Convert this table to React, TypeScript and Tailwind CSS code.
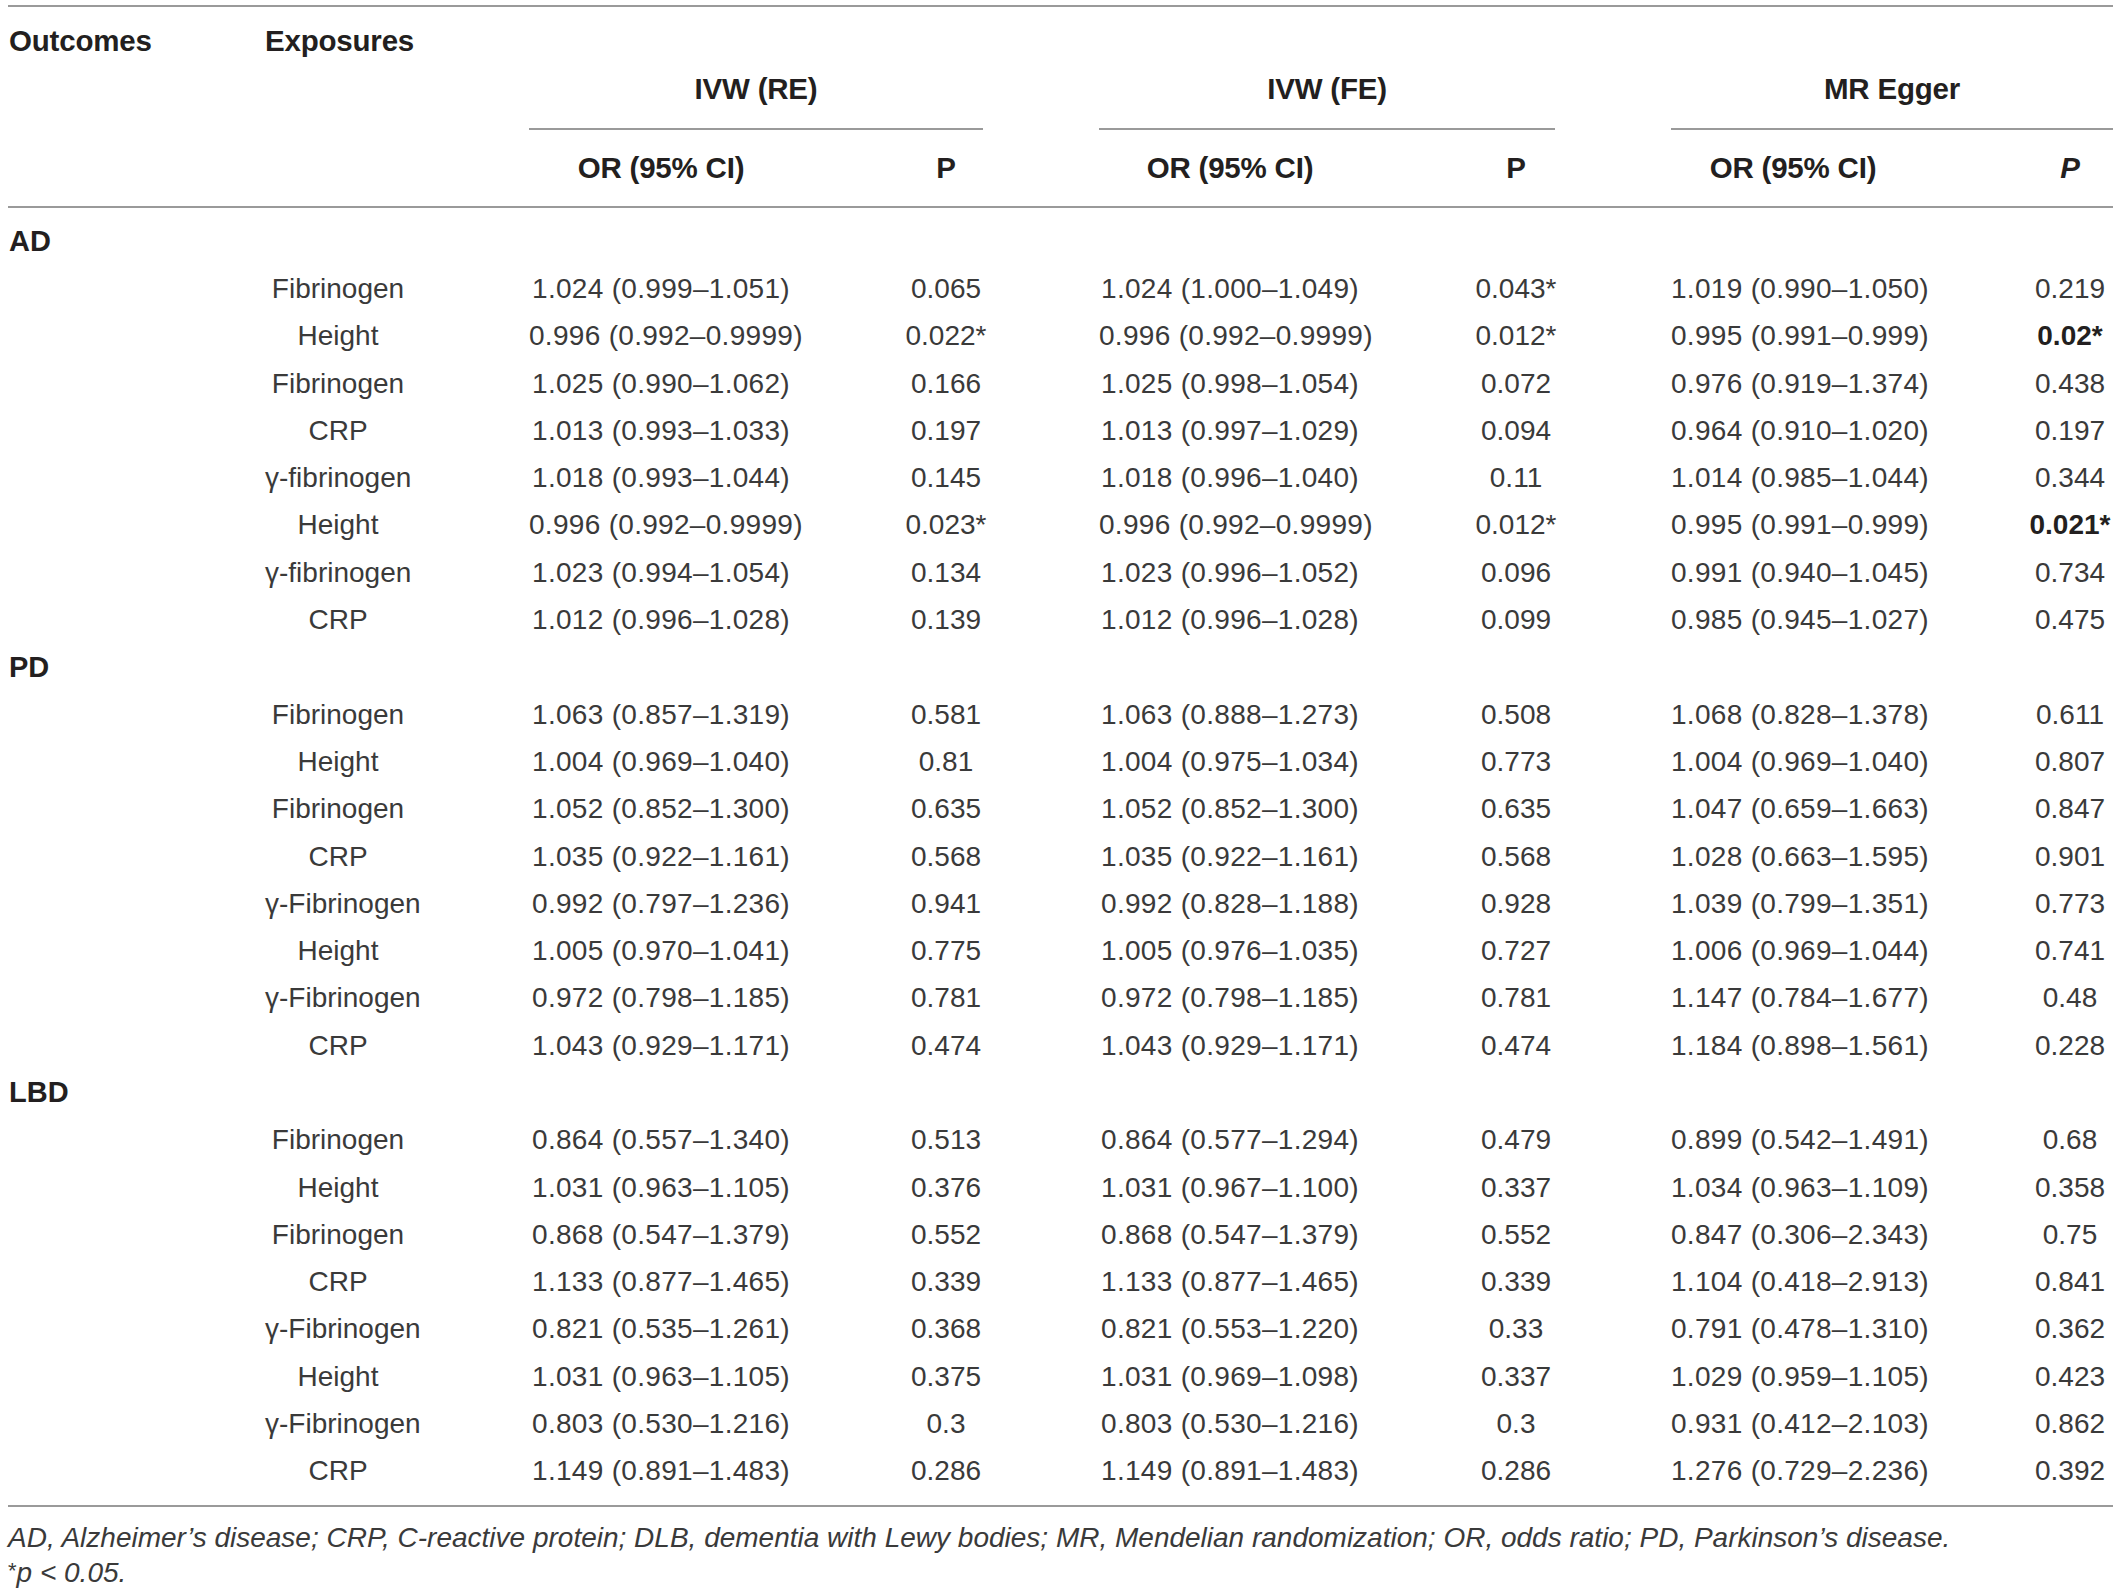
const cols = "grid grid-cols-[257px_146px_118px_264px_306px_262px_310px_244px_112px_86px]";

type Row = [string, string, string, string, string, string, string, boolean?];

const groups: { name: string; rows: Row[] }[] = [
  {
    name: "AD",
    rows: [
      ["Fibrinogen", "1.024 (0.999–1.051)", "0.065", "1.024 (1.000–1.049)", "0.043*", "1.019 (0.990–1.050)", "0.219"],
      ["Height", "0.996 (0.992–0.9999)", "0.022*", "0.996 (0.992–0.9999)", "0.012*", "0.995 (0.991–0.999)", "0.02*", true],
      ["Fibrinogen", "1.025 (0.990–1.062)", "0.166", "1.025 (0.998–1.054)", "0.072", "0.976 (0.919–1.374)", "0.438"],
      ["CRP", "1.013 (0.993–1.033)", "0.197", "1.013 (0.997–1.029)", "0.094", "0.964 (0.910–1.020)", "0.197"],
      ["γ-fibrinogen", "1.018 (0.993–1.044)", "0.145", "1.018 (0.996–1.040)", "0.11", "1.014 (0.985–1.044)", "0.344"],
      ["Height", "0.996 (0.992–0.9999)", "0.023*", "0.996 (0.992–0.9999)", "0.012*", "0.995 (0.991–0.999)", "0.021*", true],
      ["γ-fibrinogen", "1.023 (0.994–1.054)", "0.134", "1.023 (0.996–1.052)", "0.096", "0.991 (0.940–1.045)", "0.734"],
      ["CRP", "1.012 (0.996–1.028)", "0.139", "1.012 (0.996–1.028)", "0.099", "0.985 (0.945–1.027)", "0.475"],
    ],
  },
  {
    name: "PD",
    rows: [
      ["Fibrinogen", "1.063 (0.857–1.319)", "0.581", "1.063 (0.888–1.273)", "0.508", "1.068 (0.828–1.378)", "0.611"],
      ["Height", "1.004 (0.969–1.040)", "0.81", "1.004 (0.975–1.034)", "0.773", "1.004 (0.969–1.040)", "0.807"],
      ["Fibrinogen", "1.052 (0.852–1.300)", "0.635", "1.052 (0.852–1.300)", "0.635", "1.047 (0.659–1.663)", "0.847"],
      ["CRP", "1.035 (0.922–1.161)", "0.568", "1.035 (0.922–1.161)", "0.568", "1.028 (0.663–1.595)", "0.901"],
      ["γ-Fibrinogen", "0.992 (0.797–1.236)", "0.941", "0.992 (0.828–1.188)", "0.928", "1.039 (0.799–1.351)", "0.773"],
      ["Height", "1.005 (0.970–1.041)", "0.775", "1.005 (0.976–1.035)", "0.727", "1.006 (0.969–1.044)", "0.741"],
      ["γ-Fibrinogen", "0.972 (0.798–1.185)", "0.781", "0.972 (0.798–1.185)", "0.781", "1.147 (0.784–1.677)", "0.48"],
      ["CRP", "1.043 (0.929–1.171)", "0.474", "1.043 (0.929–1.171)", "0.474", "1.184 (0.898–1.561)", "0.228"],
    ],
  },
  {
    name: "LBD",
    rows: [
      ["Fibrinogen", "0.864 (0.557–1.340)", "0.513", "0.864 (0.577–1.294)", "0.479", "0.899 (0.542–1.491)", "0.68"],
      ["Height", "1.031 (0.963–1.105)", "0.376", "1.031 (0.967–1.100)", "0.337", "1.034 (0.963–1.109)", "0.358"],
      ["Fibrinogen", "0.868 (0.547–1.379)", "0.552", "0.868 (0.547–1.379)", "0.552", "0.847 (0.306–2.343)", "0.75"],
      ["CRP", "1.133 (0.877–1.465)", "0.339", "1.133 (0.877–1.465)", "0.339", "1.104 (0.418–2.913)", "0.841"],
      ["γ-Fibrinogen", "0.821 (0.535–1.261)", "0.368", "0.821 (0.553–1.220)", "0.33", "0.791 (0.478–1.310)", "0.362"],
      ["Height", "1.031 (0.963–1.105)", "0.375", "1.031 (0.969–1.098)", "0.337", "1.029 (0.959–1.105)", "0.423"],
      ["γ-Fibrinogen", "0.803 (0.530–1.216)", "0.3", "0.803 (0.530–1.216)", "0.3", "0.931 (0.412–2.103)", "0.862"],
      ["CRP", "1.149 (0.891–1.483)", "0.286", "1.149 (0.891–1.483)", "0.286", "1.276 (0.729–2.236)", "0.392"],
    ],
  },
];

function DataRow({ row }: { row: Row }) {
  const [exp, or1, p1, or2, p2, or3, p3, bold] = row;
  return (
    <div className={`${cols} h-[47.3px] items-center whitespace-nowrap text-[#3a3a3a]`}>
      <div />
      <div className="text-center">{exp}</div>
      <div />
      <div className="text-center tracking-[0.3px]">{or1}</div>
      <div className="text-center">{p1}</div>
      <div className="text-center tracking-[0.3px]">{or2}</div>
      <div className="text-center">{p2}</div>
      <div className="text-center tracking-[0.3px]">{or3}</div>
      <div />
      <div className={bold ? "text-center font-bold text-[#231f20]" : "text-center"}>{p3}</div>
    </div>
  );
}

export default function App() {
  return (
    <div className="min-h-screen bg-white pt-[5px] pl-[8px] font-['Liberation_Sans',Arial,sans-serif] text-[28px] text-[#231f20]">
      <div className="w-[2105px]">
        {/* header */}
        <div className="border-t-2 border-[#9a9a9a] text-[29.5px] tracking-[-0.2px]">
          <div className={`${cols} h-[68px] items-center font-bold`}>
            <div className="pl-[1px]">Outcomes</div>
            <div className="text-center">Exposures</div>
          </div>
          <div className="grid grid-cols-[521px_454px_116px_456px_116px_442px] h-[55px] font-bold">
            <div />
            <div className="border-b-2 border-[#9a9a9a] text-center leading-[28px]">IVW (RE)</div>
            <div />
            <div className="border-b-2 border-[#9a9a9a] text-center leading-[28px]">IVW (FE)</div>
            <div />
            <div className="border-b-2 border-[#9a9a9a] text-center leading-[28px]">MR Egger</div>
          </div>
          <div className={`${cols} h-[76px] items-center font-bold whitespace-nowrap`}>
            <div />
            <div />
            <div />
            <div className="text-center">OR (95% CI)</div>
            <div className="text-center">P</div>
            <div className="text-center">OR (95% CI)</div>
            <div className="text-center">P</div>
            <div className="text-center">OR (95% CI)</div>
            <div />
            <div className="text-center italic">P</div>
          </div>
        </div>

        {/* body */}
        <div className="border-t-2 border-b-2 border-[#9a9a9a] py-[10px]">
          {groups.map((g) => (
            <div key={g.name}>
              <div className="h-[47.3px] flex items-center pl-[1px] font-bold text-[29px]">{g.name}</div>
              {g.rows.map((r, i) => (
                <DataRow key={i} row={r} />
              ))}
            </div>
          ))}
        </div>

        {/* footnote */}
        <div className="pt-[13px] text-[28px] italic leading-[35px] text-[#3a3a3a]">
          <p>
            AD, Alzheimer’s disease; CRP, C-reactive protein; DLB, dementia with Lewy bodies; MR, Mendelian
            randomization; OR, odds ratio; PD, Parkinson’s disease.
          </p>
          <p>
            <span className="relative -top-[4px] text-[22px] not-italic">*</span>p &lt; 0.05.
          </p>
        </div>
      </div>
    </div>
  );
}
